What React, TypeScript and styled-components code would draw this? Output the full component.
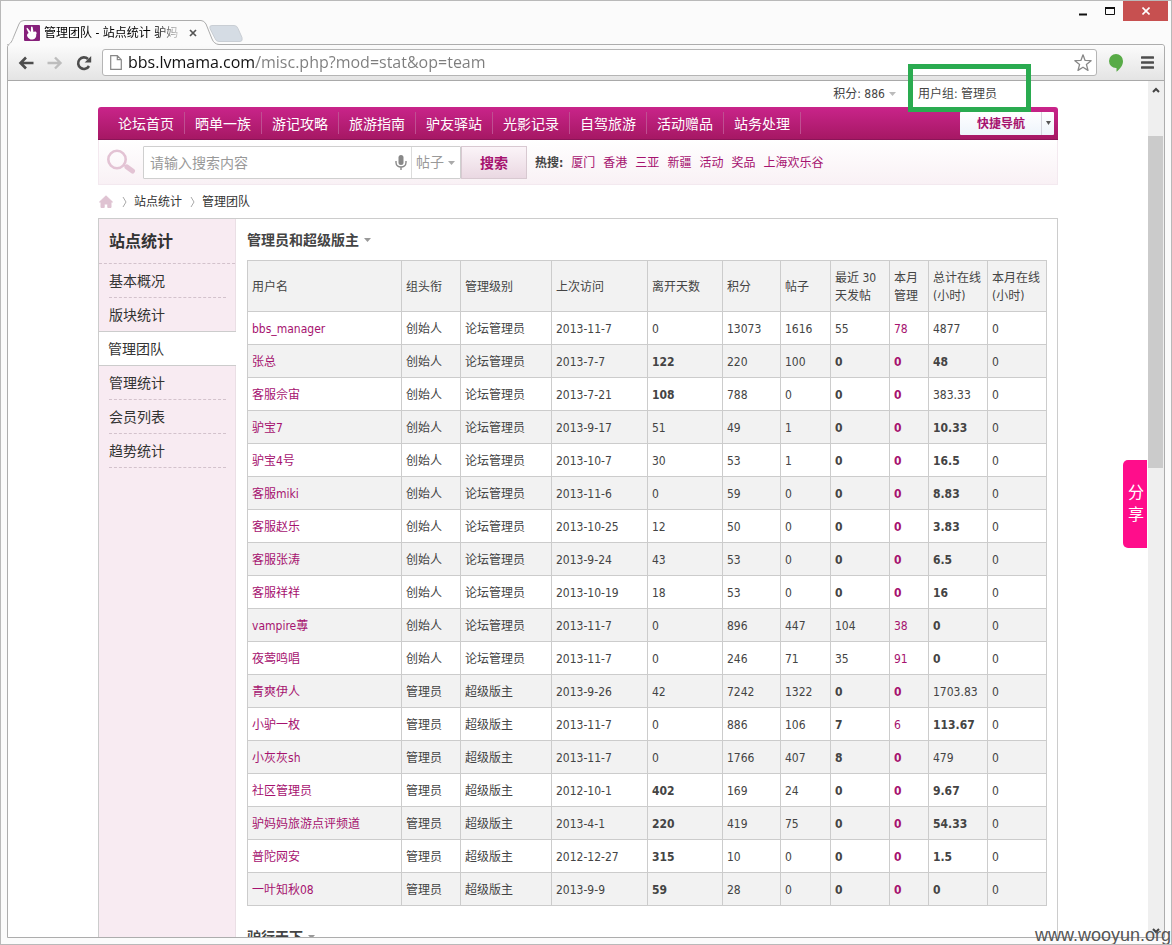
import React from 'react';
import styled, { createGlobalStyle, css } from 'styled-components';

const latin = '"DejaVu Sans Condensed", "Noto Sans"';
const cjk = '"Noto Sans CJK SC", sans-serif';
const magenta = '#a6126f';

const GlobalStyle = createGlobalStyle`
  * { box-sizing: border-box; }
  body { margin: 0; font: 12px/18px ${latin}, ${cjk}; color: #444; }
  button, input, select { font: inherit; color: inherit; margin: 0; padding: 0; border: 0; background: none; outline: 0; }
  a { text-decoration: none; color: inherit; }
  ul, h1, h2 { margin: 0; padding: 0; list-style: none; }
  svg { display: block; flex: none; }
`;

/* ---------- browser window ---------- */

const Window = styled.div`
  position: relative;
  display: flex;
  flex-direction: column;
  height: 100vh;
  padding: 0 6px 6px;
  overflow: hidden;
  border: 1px solid #b9b9b9;
  background: #fbfbfb;
`;

const TitleBar = styled.header`
  display: flex;
  justify-content: space-between;
  height: 43px;
  flex: none;
`;

const TabStrip = styled.div`
  display: flex;
  align-items: flex-end;
`;

const Tab = styled.div`
  position: relative;
  z-index: 1;
  display: flex;
  align-items: center;
  width: 206px;
  height: 25px;
  margin-bottom: -1px;
  padding: 0 8px 0 17px;
  gap: 4px;
`;

const TabShape = styled.svg`
  position: absolute;
  inset: 0;
  z-index: -1;
`;

const TabTitle = styled.span`
  width: 137px;
  overflow: hidden;
  white-space: nowrap;
  color: #000;
  mask-image: linear-gradient(90deg, #000 112px, transparent 140px);
`;

const TabClose = styled.button`
  display: grid;
  place-items: center;
  width: 16px;
  height: 16px;
`;

const NewTab = styled.button`
  height: 25px;
  padding-top: 4px;
  margin-left: -4px;
`;

const WindowControls = styled.div`
  display: flex;
  align-items: flex-start;
`;

const WindowButton = styled.button<{ $close?: boolean }>`
  display: grid;
  place-items: center;
  width: ${p => (p.$close ? 45 : 27)}px;
  height: 20px;
  margin-right: ${p => (p.$close ? -3 : 0)}px;
  background: ${p => (p.$close ? '#c75050' : 'none')};
`;

const Frame = styled.div`
  display: flex;
  flex-direction: column;
  flex: 1;
  min-height: 0;
  border: 1px solid #adadad;
  border-radius: 3px 3px 0 0;
  background: #fff;
`;

const Toolbar = styled.div`
  display: flex;
  align-items: center;
  flex: none;
  height: 36px;
  padding-left: 3px;
  border-bottom: 1px solid #a9a9a9;
  border-radius: 3px 3px 0 0;
  background: linear-gradient(#fbfbfb, #e4e4e4);
`;

const ToolButton = styled.button`
  display: grid;
  place-items: center;
  width: 29px;
  height: 28px;
`;

const MenuButton = styled(ToolButton)`
  width: 34px;
`;

const Omnibox = styled.div`
  display: flex;
  align-items: center;
  flex: 1;
  gap: 6px;
  height: 27px;
  margin: 0 4px 0 4px;
  padding: 0 4px 0 7px;
  border: 1px solid #b5b5b5;
  border-radius: 3px;
  background: #fff;
`;

const Address = styled.input`
  flex: 1;
  min-width: 0;
  height: 26px;
  padding-bottom: 2px;
  font: 16px/24px "Open Sans", sans-serif;
  color: transparent;
  background: linear-gradient(90deg, #111 128px, #7d7d7d 128px);
  background-clip: text;
  -webkit-background-clip: text;
`;

const Viewport = styled.div`
  position: relative;
  display: flex;
  flex: 1;
  min-height: 0;
`;

const Page = styled.div`
  flex: 1;
  min-width: 0;
  overflow: hidden;
`;

const Scrollbar = styled.div`
  display: flex;
  flex-direction: column;
  align-items: center;
  width: 16px;
  padding: 5px 1px 2px 0;
  background: #efefef;
`;

const Thumb = styled.div`
  width: 15px;
  height: 332px;
  margin: 42px 0 auto;
  background: #cbcbcb;
`;

/* ---------- site ---------- */

const Site = styled.div`
  width: 960px;
  max-width: 100%;
  margin: 0 auto;
`;

const UserBar = styled.div`
  display: flex;
  justify-content: flex-end;
  gap: 22px;
  height: 26px;
  padding: 4px 61px 0 0;
`;

const UserItem = styled.span`
  display: flex;
  align-items: center;
  gap: 4px;
  height: 18px;
`;

const Nav = styled.nav`
  display: flex;
  align-items: center;
  justify-content: space-between;
  height: 33px;
  padding: 0 4px 0 10px;
  border-radius: 3px 3px 0 0;
  border-bottom: 1px solid #8b1458;
  background: linear-gradient(#c9248a, #a61864);
`;

const NavList = styled.ul`
  display: flex;
`;

const NavItem = styled.li`
  padding: 2px 10px 0;
  border-right: 1px solid #bf4f91;
  font-size: 14px;
  line-height: 20px;
  color: #fff;
`;

const QuickNav = styled.button`
  display: flex;
  align-items: center;
  height: 23px;
  border-radius: 1px;
  background: linear-gradient(#fff, #eef4fb);
  color: ${magenta};
  font-weight: bold;
`;

const QuickLabel = styled.span`
  padding: 1px 16px 0 17px;
  line-height: 22px;
  border-right: 1px solid #d3d3dc;
`;

const QuickArrow = styled.span`
  display: grid;
  place-items: center;
  width: 12px;
`;

const SearchBar = styled.form`
  display: flex;
  align-items: center;
  height: 45px;
  padding: 0 8px;
  border: solid #f3e9ef;
  border-width: 0 1px 1px;
  background: linear-gradient(#fff, #f9f1f5);
`;

const SearchBox = styled.div`
  display: flex;
  align-items: center;
  width: 318px;
  height: 33px;
  margin-left: 7px;
  border: 1px solid #cfcfcf;
  border-radius: 1px;
  background: #fff;
`;

const SearchInput = styled.input`
  flex: 1;
  min-width: 0;
  height: 31px;
  padding: 2px 0 0 6px;
  font-size: 14px;
  &::placeholder { color: #999; opacity: 1; }
`;

const ScopeField = styled.div`
  position: relative;
  margin-left: 4px;
  border-left: 1px solid #dcdcdc;
`;

const Scope = styled.select`
  appearance: none;
  display: block;
  width: 48px;
  height: 31px;
  padding-left: 4px;
  font-size: 14px;
  color: #999;
`;

const ScopeArrow = styled.span`
  position: absolute;
  right: 5px;
  top: 14px;
  pointer-events: none;
`;

const SearchButton = styled.button`
  width: 66px;
  height: 33px;
  padding-top: 2px;
  border: 1px solid #d8c9d1;
  background: linear-gradient(#fbf4f8, #ead8e2);
  color: ${magenta};
  font-size: 14px;
  font-weight: bold;
`;

const HotWords = styled.div`
  display: flex;
  gap: 8px;
  margin-left: 8px;
  padding-top: 2px;
  white-space: nowrap;
  a { color: ${magenta}; }
`;

const Crumbs = styled.nav`
  display: flex;
  align-items: center;
  height: 33px;
  color: #333;
`;

const Chevron = styled.svg`
  margin: 0 7px 0 8px;
`;

const Main = styled.div`
  display: flex;
  border: 1px solid #ccc;
`;

const Sidebar = styled.aside`
  width: 137px;
  flex: none;
  background: #f8ebf2;
  border-right: 1px solid #eadfe5;
`;

const SidebarTitle = styled.h2`
  height: 45px;
  padding-left: 10px;
  border-bottom: 1px dashed #d3c2cc;
  font-size: 16px;
  line-height: 45px;
  color: #333;
`;

const SideLink = styled.a<{ $active?: boolean; $plain?: boolean }>`
  display: block;
  height: 34px;
  margin: 0 9px 0 10px;
  border-bottom: 1px ${p => (p.$plain ? 'solid transparent' : 'dashed #d3c2cc')};
  font-size: 14px;
  line-height: 35px;
  color: #333;
  ${p => p.$active && css`
    height: 35px;
    margin: -1px -1px 0 0;
    padding-left: 9px;
    border: solid #ccc;
    border-width: 1px 0;
    background: #fff;
    line-height: 34px;
  `}
`;

const Content = styled.main`
  flex: 1;
  min-width: 0;
  padding: 0 10px 80px 11px;
`;

const GroupTitle = styled.h1`
  display: flex;
  align-items: center;
  gap: 5px;
  height: 41px;
  font-size: 14px;
  line-height: 20px;
`;

const StatTable = styled.table`
  width: 100%;
  margin-bottom: 10px;
  border-collapse: collapse;
  table-layout: fixed;
`;

const cell = css`
  padding: 2px 0 0 4px;
  border: 1px solid #ccc;
  text-align: left;
`;

const HeadCell = styled.th<{ $width?: number }>`
  ${cell}
  width: ${p => (p.$width ? `${p.$width}px` : 'auto')};
  height: 51px;
  background: #f2f2f2;
  font-weight: normal;
  white-space: pre-line;
`;

const Row = styled.tr`
  height: 33px;
  &:nth-child(even) { background: #f2f2f2; }
`;

const Cell = styled.td<{ $bold?: boolean; $link?: boolean }>`
  ${cell}
  white-space: nowrap;
  font-weight: ${p => (p.$bold ? 'bold' : 'normal')};
  color: ${p => (p.$link ? magenta : '#444')};
`;

const ShareTab = styled.button`
  position: absolute;
  right: 17px;
  top: 379px;
  width: 24px;
  height: 88px;
  padding: 0 3px 0 5px;
  border-radius: 5px 0 0 5px;
  background: #ff0d8b;
  color: #fff;
  font-size: 16px;
  line-height: 22px;
`;

const Highlight = styled.div`
  position: absolute;
  top: 63px;
  right: 140px;
  width: 123px;
  height: 48px;
  border: 5px solid #2aab50;
  pointer-events: none;
`;

const Watermark = styled.div`
  position: absolute;
  right: 0;
  bottom: -2px;
  font: 18px/22px "Liberation Sans", sans-serif;
  color: #555;
`;

const Caret = ({ color = '#999', size = 7 }: { color?: string; size?: number }) => (
  <svg width={size} height="4" viewBox="0 0 8 4" preserveAspectRatio="none"><path d="M0 0h8L4 4z" fill={color} /></svg>
);

const ScrollArrow = ({ down }: { down?: boolean }) => (
  <svg width="8" height="8" viewBox="0 0 8 8">
    <path d={down ? 'M1 2l3 3 3-3' : 'M1 6l3-3 3 3'} fill="none" stroke="#444" strokeWidth="2" />
  </svg>
);

const CrumbArrow = () => (
  <Chevron width="5" height="12" viewBox="0 0 5 12"><path d="M1 1l3 5-3 5" fill="none" stroke="#aaa" /></Chevron>
);

const navItems = ['论坛首页', '晒单一族', '游记攻略', '旅游指南', '驴友驿站', '光影记录', '自驾旅游', '活动赠品', '站务处理'];
const hotWords = ['厦门', '香港', '三亚', '新疆', '活动', '奖品', '上海欢乐谷'];
const sideItems = ['基本概况', '版块统计', '管理团队', '管理统计', '会员列表', '趋势统计'];

const columns: [string, number?][] = [
  ['用户名'], ['组头衔', 59], ['管理级别', 91], ['上次访问', 96], ['离开天数', 75], ['积分', 58],
  ['帖子', 50], ['最近 30\n天发帖', 59], ['本月\n管理', 39], ['总计在线\n(小时)', 59], ['本月在线\n(小时)', 59],
];

/* name, role, last visit, days away, points, posts, recent posts, actions, hours; "*" marks an emphasised value */
const members: [string, 'founder' | 'admin', ...string[]][] = [
  ['bbs_manager', 'founder', '2013-11-7', '0', '13073', '1616', '55', '78', '4877'],
  ['张总', 'founder', '2013-7-7', '*122', '220', '100', '*0', '*0', '*48'],
  ['客服佘宙', 'founder', '2013-7-21', '*108', '788', '0', '*0', '*0', '383.33'],
  ['驴宝7', 'founder', '2013-9-17', '51', '49', '1', '*0', '*0', '*10.33'],
  ['驴宝4号', 'founder', '2013-10-7', '30', '53', '1', '*0', '*0', '*16.5'],
  ['客服miki', 'founder', '2013-11-6', '0', '59', '0', '*0', '*0', '*8.83'],
  ['客服赵乐', 'founder', '2013-10-25', '12', '50', '0', '*0', '*0', '*3.83'],
  ['客服张涛', 'founder', '2013-9-24', '43', '53', '0', '*0', '*0', '*6.5'],
  ['客服祥祥', 'founder', '2013-10-19', '18', '53', '0', '*0', '*0', '*16'],
  ['vampire蓴', 'founder', '2013-11-7', '0', '896', '447', '104', '38', '*0'],
  ['夜莺鸣唱', 'founder', '2013-11-7', '0', '246', '71', '35', '91', '*0'],
  ['青爽伊人', 'admin', '2013-9-26', '42', '7242', '1322', '*0', '*0', '1703.83'],
  ['小驴一枚', 'admin', '2013-11-7', '0', '886', '106', '*7', '6', '*113.67'],
  ['小灰灰sh', 'admin', '2013-11-7', '0', '1766', '407', '*8', '*0', '479'],
  ['社区管理员', 'admin', '2012-10-1', '*402', '169', '24', '*0', '*0', '*9.67'],
  ['驴妈妈旅游点评频道', 'admin', '2013-4-1', '*220', '419', '75', '*0', '*0', '*54.33'],
  ['普陀网安', 'admin', '2012-12-27', '*315', '10', '0', '*0', '*0', '*1.5'],
  ['一叶知秋08', 'admin', '2013-9-9', '*59', '28', '0', '*0', '*0', '*0'],
];

const roles = { founder: ['创始人', '论坛管理员'], admin: ['管理员', '超级版主'] };

function BrowserTitle() {
  return (
    <TitleBar>
      <TabStrip>
        <Tab>
          <TabShape width="212" height="25" viewBox="0 0 212 25">
            <path d="M0 25C4 24 5 21 7 16L12 4Q13 .5 17 .5H194Q197 .5 199 4L205 19Q207 24 212 24.500V25z" fill="#fbfbfb" />
            <path d="M0 25C4 24 5 21 7 16L12 4Q13 .5 17 .5H194Q197 .5 199 4L205 19Q207 24 212 24.500" fill="none" stroke="#adadad" />
          </TabShape>
          <svg width="16" height="16" viewBox="0 0 16 16">
            <rect width="16" height="16" rx="1" fill="#86207a" />
            <path d="M4 3.500C3 2.200 2.200 3 2.800 4.500L4.600 8C3 8.500 2.600 10.500 3.600 12c1 1.800 3 2.800 5 2.500 2.600-.3 4-2.500 3.600-5 .8-1 .4-2.500-.7-3-.7-.3-1.500 0-2 .4L8.700 2.500C8.500 1 7 1 7 2.500L6.800 7z" fill="#fff" />
          </svg>
          <TabTitle>管理团队 - 站点统计 驴妈</TabTitle>
          <TabClose aria-label="关闭标签页">
            <svg width="8" height="8" viewBox="0 0 8 8"><path d="M1 1l6 6M7 1L1 7" stroke="#555" strokeWidth="1.700" /></svg>
          </TabClose>
        </Tab>
        <NewTab aria-label="新标签页">
          <svg width="34" height="17" viewBox="0 0 34 17">
            <path d="M3 .5h22q3 0 4 3l4 9q1 4-2 4H10q-3 0-4-3L1 3.500Q0 .5 3 .5z" fill="#d5dce4" stroke="#c9ced4" />
          </svg>
        </NewTab>
      </TabStrip>
      <WindowControls>
        <WindowButton aria-label="最小化"><svg width="8" height="9"><path d="M0 7.500h8" stroke="#111" strokeWidth="2" /></svg></WindowButton>
        <WindowButton aria-label="最大化"><svg width="10" height="8"><path d="M.5 1v6.500h9V1" fill="none" stroke="#111" /><path d="M0 1h10" stroke="#111" strokeWidth="2" /></svg></WindowButton>
        <WindowButton $close aria-label="关闭"><svg width="8" height="8" viewBox="0 0 8 8"><path d="M.5.5l7 7M7.500.5l-7 7" stroke="#fff" strokeWidth="1.600" /></svg></WindowButton>
      </WindowControls>
    </TitleBar>
  );
}

function BrowserToolbar() {
  return (
    <Toolbar>
      <ToolButton aria-label="后退"><svg width="16" height="14" viewBox="0 0 16 14"><path d="M8 1.500L2.500 7 8 12.500M3 7h12.500" fill="none" stroke="#4d4d4d" strokeWidth="2.600" /></svg></ToolButton>
      <ToolButton aria-label="前进"><svg width="16" height="14" viewBox="0 0 16 14"><path d="M8 1.500L13.500 7 8 12.500M13 7H.5" fill="none" stroke="#bdbdbd" strokeWidth="2.400" /></svg></ToolButton>
      <ToolButton aria-label="刷新"><svg width="16" height="16" viewBox="0 0 16 16"><path d="M13 11A5.800 5.800 0 1 1 12 4" fill="none" stroke="#4d4d4d" strokeWidth="2.600" /><path d="M15.200 1v6.500H8.700z" fill="#4d4d4d" /></svg></ToolButton>
      <Omnibox>
        <svg width="12" height="15" viewBox="0 0 12 15"><path d="M.7.7h6.600l4 4v9.600H.7zM7.300.7v4h4" fill="#fff" stroke="#888" strokeWidth="1.200" /></svg>
        <Address aria-label="地址" defaultValue="bbs.lvmama.com/misc.php?mod=stat&op=team" />
        <svg width="18" height="18" viewBox="0 0 18 18"><path d="M9 .8l2.100 5.600 6 .3-4.700 3.700 1.600 6L9 13.200l-5 3.200 1.600-6L.9 6.700l6-.3z" fill="#fff" stroke="#888" strokeWidth="1.300" strokeLinejoin="round" /></svg>
      </Omnibox>
      <ToolButton aria-label="扩展程序"><svg width="14" height="18" viewBox="0 0 14 18"><path d="M7 0a7 7 0 0 1 7 7c0 4.500-3 8-6.500 10.800V14H7A7 7 0 0 1 7 0z" fill="#58ab47" /></svg></ToolButton>
      <MenuButton aria-label="菜单"><svg width="13" height="13" viewBox="0 0 13 13"><path d="M1 1.500h11M1 6.500h11M1 11.500h11" stroke="#4d4d4d" strokeWidth="2.600" strokeLinecap="round" /></svg></MenuButton>
    </Toolbar>
  );
}

function SiteHeader() {
  return (
    <>
      <UserBar>
        <UserItem>积分: 886 <Caret color="#bbb" /></UserItem>
        <UserItem>用户组: 管理员</UserItem>
      </UserBar>
      <Nav>
        <NavList>{navItems.map(n => <NavItem key={n}><a href="#">{n}</a></NavItem>)}</NavList>
        <QuickNav><QuickLabel>快捷导航</QuickLabel><QuickArrow><Caret color="#555" size={5} /></QuickArrow></QuickNav>
      </Nav>
      <SearchBar onSubmit={e => e.preventDefault()}>
        <svg width="29" height="26" viewBox="0 0 29 26">
          <path d="M17 16l4 2.500" stroke="#e3c3d4" strokeWidth="2" />
          <circle cx="10" cy="10.500" r="8.700" fill="none" stroke="#e3c3d4" strokeWidth="2.600" />
          <path d="M20 18l5.500 4" stroke="#e3c3d4" strokeWidth="5" strokeLinecap="round" />
        </svg>
        <SearchBox>
          <SearchInput aria-label="搜索内容" placeholder="请输入搜索内容" />
          <svg width="12" height="15" viewBox="0 0 12 15">
            <rect x="3.500" width="5" height="10" rx="2.500" fill="#888" />
            <path d="M1 6v1.500c0 6 10 6 10 0V6M6 12v3" fill="none" stroke="#888" strokeWidth="1.400" />
          </svg>
          <ScopeField>
            <Scope aria-label="搜索范围"><option>帖子</option></Scope>
            <ScopeArrow><Caret color="#aaa" /></ScopeArrow>
          </ScopeField>
        </SearchBox>
        <SearchButton type="submit">搜索</SearchButton>
        <HotWords><strong>热搜:</strong>{hotWords.map(w => <a href="#" key={w}>{w}</a>)}</HotWords>
      </SearchBar>
      <Crumbs>
        <svg width="16" height="14" viewBox="0 0 16 14"><path d="M8 .8L14.500 7H13v5.500H9.800V9H6.200v3.500H3V7H1.500z" fill="#dfc3d2" stroke="#dfc3d2" strokeLinejoin="round" /></svg>
        <CrumbArrow /><a href="#">站点统计</a><CrumbArrow /><a href="#">管理团队</a>
      </Crumbs>
    </>
  );
}

function MemberTable() {
  return (
    <StatTable>
      <thead><tr>{columns.map(([label, width]) => <HeadCell key={label} $width={width}>{label}</HeadCell>)}</tr></thead>
      <tbody>
        {members.map(([name, role, ...values]) => (
          <Row key={name}>
            <Cell $link><a href="#">{name}</a></Cell>
            {roles[role].map(r => <Cell key={r}>{r}</Cell>)}
            {values.map((v, i) => (
              <Cell key={i} $bold={v[0] === '*'} $link={i === 5}>
                {i === 5 ? <a href="#">{v.replace('*', '')}</a> : v.replace('*', '')}
              </Cell>
            ))}
            <Cell>0</Cell>
          </Row>
        ))}
      </tbody>
    </StatTable>
  );
}

export default function App() {
  return (
    <Window>
      <GlobalStyle />
      <BrowserTitle />
      <Frame>
        <BrowserToolbar />
        <Viewport>
          <Page>
            <Site>
              <SiteHeader />
              <Main>
                <Sidebar>
                  <SidebarTitle>站点统计</SidebarTitle>
                  {sideItems.map((s, i) => <SideLink href="#" key={s} $active={i === 2} $plain={i === 1}>{s}</SideLink>)}
                </Sidebar>
                <Content>
                  <GroupTitle>管理员和超级版主 <Caret /></GroupTitle>
                  <MemberTable />
                  <GroupTitle>驴行天下 <Caret /></GroupTitle>
                </Content>
              </Main>
            </Site>
          </Page>
          <Scrollbar><ScrollArrow /><Thumb /><ScrollArrow down /></Scrollbar>
          <ShareTab>分享</ShareTab>
        </Viewport>
      </Frame>
      <Highlight />
      <Watermark>www.wooyun.org</Watermark>
    </Window>
  );
}
